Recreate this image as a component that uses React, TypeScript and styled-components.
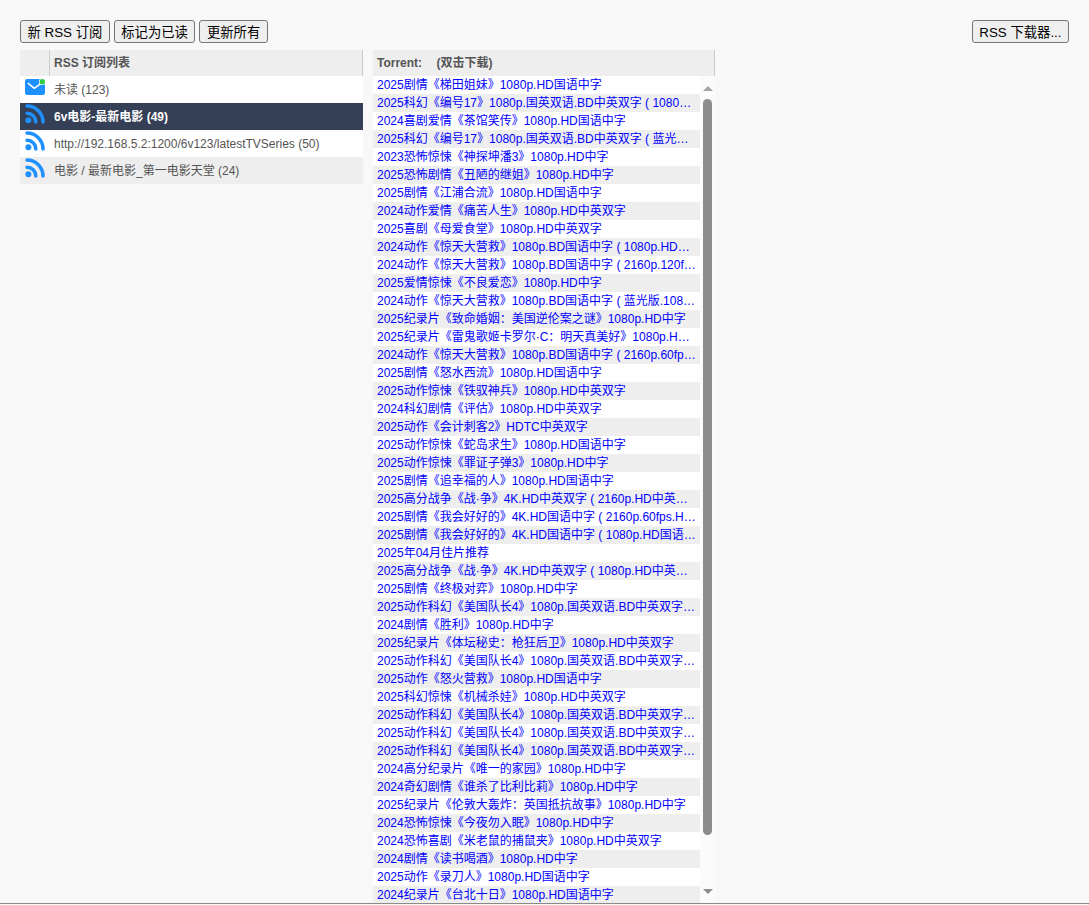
import React from "react";
import styled, { createGlobalStyle } from "styled-components";

const feeds = [
  { name: "未读 (123)", icon: "mail" },
  { name: "6v电影-最新电影 (49)", icon: "rss", selected: true },
  { name: "http://192.168.5.2:1200/6v123/latestTVSeries (50)", icon: "rss" },
  { name: "电影 / 最新电影_第一电影天堂 (24)", icon: "rss" },
];

const marvel = "2025动作科幻《美国队长4》1080p.国英双语.BD中英双字 ( 1080p.HD中英双字 )";

const torrents = [
  "2025剧情《梯田姐妹》1080p.HD国语中字",
  "2025科幻《编号17》1080p.国英双语.BD中英双字 ( 1080p.HD中英双字 )",
  "2024喜剧爱情《茶馆笑传》1080p.HD国语中字",
  "2025科幻《编号17》1080p.国英双语.BD中英双字 ( 蓝光版.1080p )",
  "2023恐怖惊悚《神探坤潘3》1080p.HD中字",
  "2025恐怖剧情《丑陋的继姐》1080p.HD中字",
  "2025剧情《江浦合流》1080p.HD国语中字",
  "2024动作爱情《痛苦人生》1080p.HD中英双字",
  "2025喜剧《母爱食堂》1080p.HD中英双字",
  "2024动作《惊天大营救》1080p.BD国语中字 ( 1080p.HD国语中字 )",
  "2024动作《惊天大营救》1080p.BD国语中字 ( 2160p.120fps.HD )",
  "2025爱情惊悚《不良爱恋》1080p.HD中字",
  "2024动作《惊天大营救》1080p.BD国语中字 ( 蓝光版.1080p.BD )",
  "2025纪录片《致命婚姻：美国逆伦案之谜》1080p.HD中字",
  "2025纪录片《雷鬼歌姬卡罗尔·C：明天真美好》1080p.HD中字",
  "2024动作《惊天大营救》1080p.BD国语中字 ( 2160p.60fps.HD )",
  "2025剧情《怒水西流》1080p.HD国语中字",
  "2025动作惊悚《铁驭神兵》1080p.HD中英双字",
  "2024科幻剧情《评估》1080p.HD中英双字",
  "2025动作《会计刺客2》HDTC中英双字",
  "2025动作惊悚《蛇岛求生》1080p.HD国语中字",
  "2025动作惊悚《罪证子弹3》1080p.HD中字",
  "2025剧情《追幸福的人》1080p.HD国语中字",
  "2025高分战争《战·争》4K.HD中英双字 ( 2160p.HD中英双字 )",
  "2025剧情《我会好好的》4K.HD国语中字 ( 2160p.60fps.HD国语 )",
  "2025剧情《我会好好的》4K.HD国语中字 ( 1080p.HD国语中字 )",
  "2025年04月佳片推荐",
  "2025高分战争《战·争》4K.HD中英双字 ( 1080p.HD中英双字 )",
  "2025剧情《终极对弈》1080p.HD中字",
  marvel,
  "2024剧情《胜利》1080p.HD中字",
  "2025纪录片《体坛秘史：枪狂后卫》1080p.HD中英双字",
  marvel,
  "2025动作《怒火营救》1080p.HD国语中字",
  "2025科幻惊悚《机械杀娃》1080p.HD中英双字",
  marvel,
  marvel,
  marvel,
  "2024高分纪录片《唯一的家园》1080p.HD中字",
  "2024奇幻剧情《谁杀了比利比莉》1080p.HD中字",
  "2025纪录片《伦敦大轰炸：英国抵抗故事》1080p.HD中字",
  "2024恐怖惊悚《今夜勿入眠》1080p.HD中字",
  "2024恐怖喜剧《米老鼠的捕鼠夹》1080p.HD中英双字",
  "2024剧情《读书喝酒》1080p.HD中字",
  "2025动作《录刀人》1080p.HD国语中字",
  "2024纪录片《台北十日》1080p.HD国语中字",
];

const RssIcon = () => (
  <svg width="20" height="20" viewBox="0 0 20 20" fill="none">
    <circle cx="3.4" cy="16.2" r="3" fill="#1e90ff" />
    <path d="M2 9.2a8.8 8.8 0 0 1 8.8 8.8" stroke="#1e90ff" strokeWidth="3.5" strokeLinecap="round" />
    <path d="M2 2a16 16 0 0 1 16 16" stroke="#1e90ff" strokeWidth="3.5" strokeLinecap="round" />
  </svg>
);

const MailIcon = () => (
  <svg width="20" height="20" viewBox="0 0 20 20" fill="none">
    <rect x="0" y="2" width="20" height="16" rx="2.2" fill="#1e90ff" />
    <path d="M3.3 6.3l6 5 6.7-5" stroke="#fff" strokeWidth="1.5" strokeLinecap="round" strokeLinejoin="round" />
    <circle cx="17.3" cy="4.7" r="3.4" fill="#fff" />
    <circle cx="17.3" cy="4.7" r="2.7" fill="#2ecc40" />
  </svg>
);

const App = () => (
  <>
    <GlobalStyle />
    <Page>
      <Toolbar>
        <ButtonGroup>
          <Button>新 RSS 订阅</Button>
          <Button>标记为已读</Button>
          <Button>更新所有</Button>
        </ButtonGroup>
        <Button>RSS 下载器...</Button>
      </Toolbar>
      <Panels>
        <FeedPanel>
          <FeedHeader>
            <IconHead />
            <NameHead>RSS 订阅列表</NameHead>
          </FeedHeader>
          {feeds.map((feed, i) => (
            <FeedRow key={feed.name} $selected={feed.selected} $striped={i === 3}>
              <FeedIcon>{feed.icon === "mail" ? <MailIcon /> : <RssIcon />}</FeedIcon>
              <FeedName>{feed.name}</FeedName>
            </FeedRow>
          ))}
        </FeedPanel>
        <TorrentPanel>
          <TorrentHeader>
            Torrent:<Hint>(双击下载)</Hint>
          </TorrentHeader>
          <TorrentBody>
            <TorrentList>
              {torrents.map((title, i) => (
                <TorrentRow key={i} $striped={i % 2 === 1}>
                  {title}
                </TorrentRow>
              ))}
            </TorrentList>
            <ScrollTrack>
              <ArrowUp />
              <ScrollThumb />
              <ArrowDown />
            </ScrollTrack>
          </TorrentBody>
        </TorrentPanel>
      </Panels>
    </Page>
  </>
);

export default App;

const GlobalStyle = createGlobalStyle`
  html, body {
    margin: 0;
    padding: 0;
    background: #f8f8f8;
    overflow: hidden;
  }
  body {
    font-family: "Liberation Sans", "Noto Sans CJK SC", sans-serif;
    font-size: 12px;
  }
`;

const Page = styled.div`
  height: 905px;
  display: flex;
  flex-direction: column;
  overflow: hidden;
  box-sizing: border-box;
  border-bottom: 1px solid #f8f8f8;
`;

const Toolbar = styled.div`
  display: flex;
  justify-content: space-between;
  padding: 20px 20px 7px 20px;
`;

const ButtonGroup = styled.div`
  display: flex;
  gap: 4px;
`;

const Button = styled.button`
  height: 23px;
  padding: 0 6.5px;
  font-family: "Liberation Sans", "Noto Sans CJK SC", sans-serif;
  font-size: 13.33px;
  color: #000;
  background: #efefef;
  border: 1px solid #767676;
  border-radius: 3px;
`;

const Panels = styled.div`
  flex: 1;
  min-height: 0;
  display: flex;
  align-items: flex-start;
  gap: 10px;
  padding-left: 20px;
  border-bottom: 1px solid #8a8a8a;
`;

const FeedPanel = styled.div`
  width: 343px;
  flex: none;
`;

const FeedHeader = styled.div`
  display: flex;
  height: 26px;
  background: #eee;
  border-right: 1px solid #ccc;
  color: #555;
  font-weight: bold;
`;

const IconHead = styled.div`
  width: 29px;
  border-right: 1px solid #ccc;
`;

const NameHead = styled.div`
  padding-left: 4px;
  line-height: 26px;
`;

const FeedRow = styled.div<{ $selected?: boolean; $striped?: boolean }>`
  display: flex;
  height: 27px;
  overflow: hidden;
  color: ${props => (props.$selected ? "#fff" : "#555")};
  font-weight: ${props => (props.$selected ? "bold" : "normal")};
  background: ${props => (props.$selected ? "#354057" : props.$striped ? "#eee" : "#fff")};
`;

const FeedIcon = styled.div`
  width: 34px;
  padding: 1px 0 0 5px;
  box-sizing: border-box;
  display: flex;
  flex: none;
`;

const FeedName = styled.div`
  line-height: 28px;
`;

const TorrentPanel = styled.div`
  width: 342px;
  height: 100%;
  flex: none;
  display: flex;
  flex-direction: column;
`;

const TorrentHeader = styled.div`
  height: 26px;
  flex: none;
  line-height: 26px;
  padding-left: 4px;
  background: #eee;
  border-right: 1px solid #ccc;
  color: #555;
  font-weight: bold;
`;

const Hint = styled.span`
  margin-left: 14.5px;
`;

const TorrentBody = styled.div`
  flex: 1;
  min-height: 0;
  display: flex;
  overflow: hidden;
`;

const TorrentList = styled.div`
  width: 327px;
  flex: none;
`;

const TorrentRow = styled.div<{ $striped: boolean }>`
  height: 18px;
  line-height: 18px;
  padding: 0 4px;
  color: #00f;
  white-space: nowrap;
  overflow: hidden;
  text-overflow: ellipsis;
  background: ${props => (props.$striped ? "#eee" : "#fff")};
`;

const ScrollTrack = styled.div`
  flex: 1;
  display: flex;
  flex-direction: column;
  align-items: center;
  padding-top: 10px;
  background: #fbfbfb;
`;

const ArrowUp = styled.div`
  flex: none;
  width: 0;
  height: 0;
  border-left: 5px solid transparent;
  border-right: 5px solid transparent;
  border-bottom: 5px solid #a3a3a3;
`;

const ScrollThumb = styled.div`
  flex: none;
  width: 9px;
  height: 736px;
  margin-top: 8px;
  border-radius: 5px;
  background: #8c8c8c;
`;

const ArrowDown = styled.div`
  flex: none;
  width: 0;
  height: 0;
  margin-top: 54px;
  border-left: 5px solid transparent;
  border-right: 5px solid transparent;
  border-top: 5px solid #8c8c8c;
`;
